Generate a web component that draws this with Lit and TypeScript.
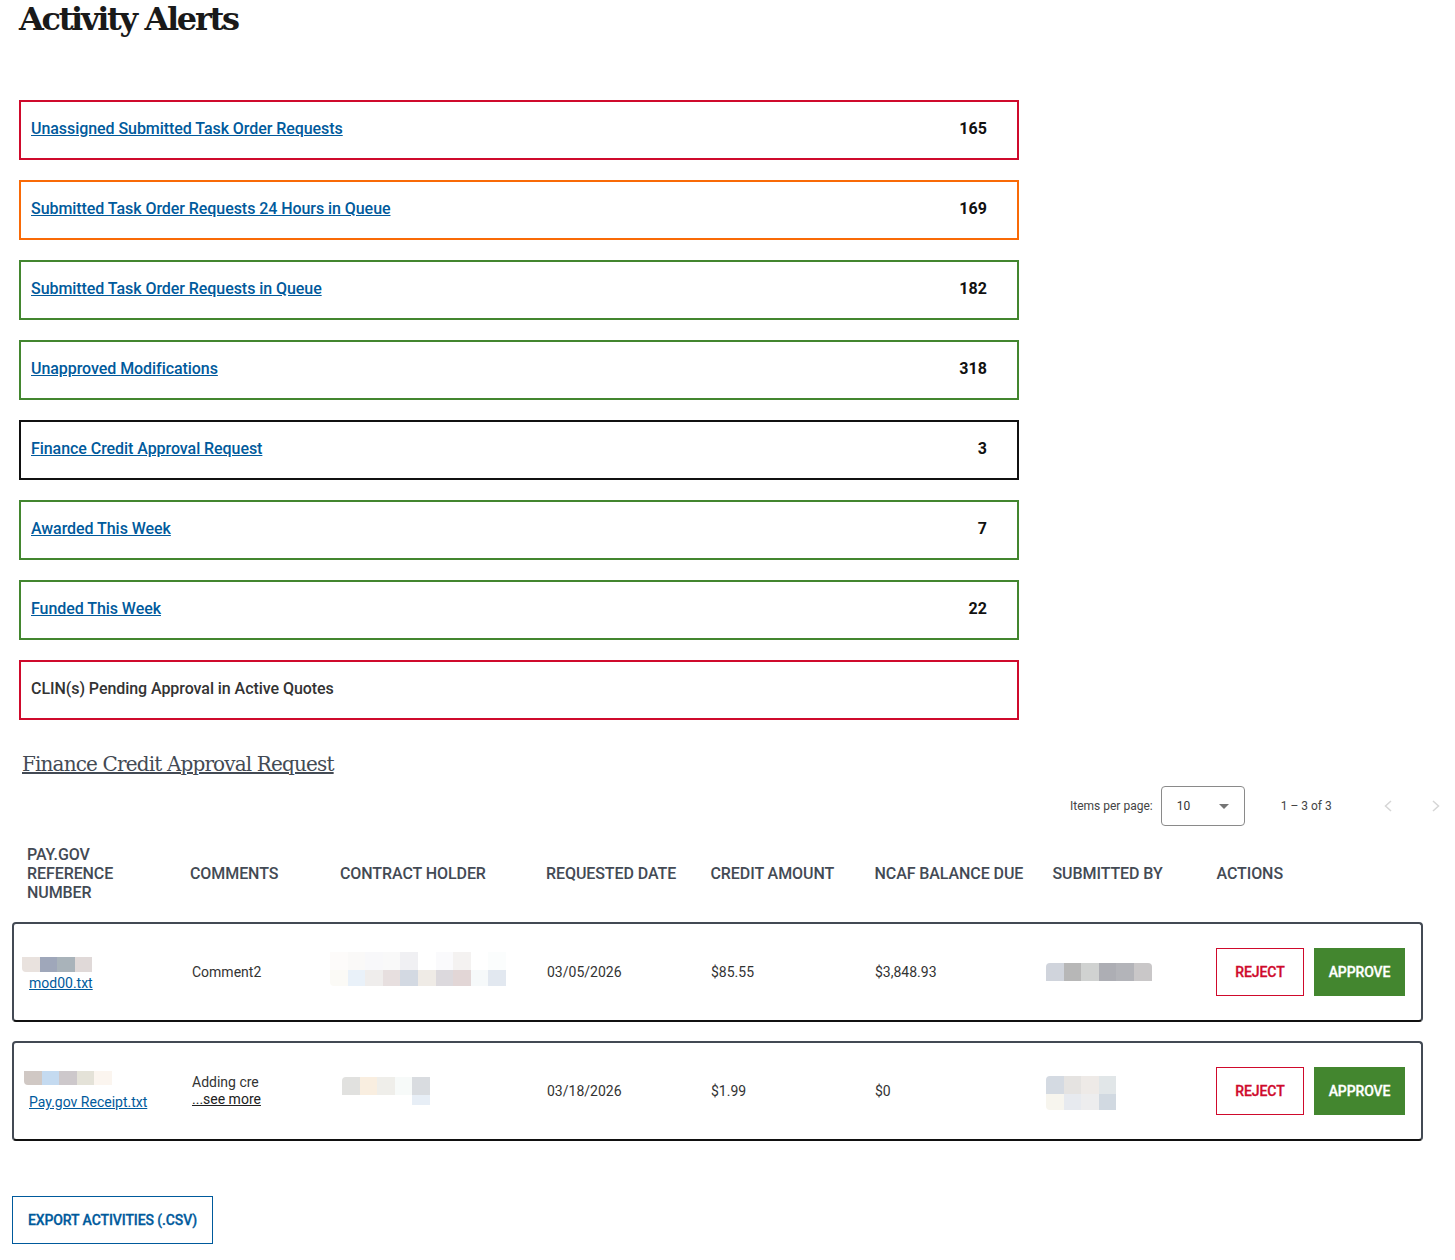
import { LitElement, html, css } from "lit";
import { customElement } from "lit/decorators.js";

const alerts = [
  { label: "Unassigned Submitted Task Order Requests", count: "165", tone: "red", link: true },
  { label: "Submitted Task Order Requests 24 Hours in Queue", count: "169", tone: "orange", link: true },
  { label: "Submitted Task Order Requests in Queue", count: "182", tone: "green", link: true },
  { label: "Unapproved Modifications", count: "318", tone: "green", link: true },
  { label: "Finance Credit Approval Request", count: "3", tone: "black", link: true },
  { label: "Awarded This Week", count: "7", tone: "green", link: true },
  { label: "Funded This Week", count: "22", tone: "green", link: true },
  { label: "CLIN(s) Pending Approval in Active Quotes", count: "", tone: "red", link: false },
];

const headers = [
  "PAY.GOV REFERENCE NUMBER",
  "COMMENTS",
  "CONTRACT HOLDER",
  "REQUESTED DATE",
  "CREDIT AMOUNT",
  "NCAF BALANCE DUE",
  "SUBMITTED BY",
  "ACTIONS",
];

type Mosaic = { cols: number; heights: number[]; cells: string[] };

const rows = [
  {
    file: "mod00.txt",
    ref: { cols: 4, heights: [15], cells: ["#e9e2de", "#9fa7ba", "#a9b3ba", "#e0d9d8"] },
    refClass: "ref-a",
    holder: {
      cols: 10,
      heights: [18, 16],
      cells: [
        "#fdfbfa", "#faf9f8", "#f8f8fa", "#f9f9f9", "#f0f0f3", "#ffffff", "#fafafc", "#f4f2f1", "#ffffff", "#fbfdfd",
        "#fbfaf6", "#e9f1f9", "#efedec", "#e7dfdf", "#d3d9e2", "#efebe6", "#dcd9dd", "#e2d6d6", "#f6f9fa", "#e2e8f0",
      ],
    },
    holderClass: "holder-a",
    date: "03/05/2026",
    credit: "$85.55",
    balance: "$3,848.93",
    by: { cols: 6, heights: [18], cells: ["#d0d4dc", "#b7b7b7", "#d0d2d1", "#adaeb4", "#b3b4b9", "#c9c7c8"] },
    byClass: "by-a",
    comment: "Comment2",
    more: false,
  },
  {
    file: "Pay.gov Receipt.txt",
    ref: { cols: 5, heights: [14], cells: ["#d0c8c4", "#c4daf0", "#cdc8cb", "#e4e2d8", "#fbf5ef"] },
    refClass: "ref-b",
    holder: {
      cols: 5,
      heights: [18, 10],
      cells: [
        "#e1e1df", "#f9eee0", "#efeeea", "#f7faf9", "#d9dce0",
        "#ffffff", "#ffffff", "#ffffff", "#ffffff", "#e7eef6",
      ],
    },
    holderClass: "holder-b",
    date: "03/18/2026",
    credit: "$1.99",
    balance: "$0",
    by: {
      cols: 4,
      heights: [18, 16],
      cells: ["#d4dae2", "#e5e3e1", "#eeeae7", "#e1e6e8", "#f7f5ee", "#e7eaef", "#ededee", "#d1d9e1"],
    },
    byClass: "by-b",
    comment: "Adding cre",
    more: true,
  },
];

// redacted values show up as pixelated blocks in the reference
const mosaic = (m: Mosaic, cls = "") => html`<div
  class="mosaic ${cls}"
  style="grid-template-columns: repeat(${m.cols}, 17.6px); grid-template-rows: ${m.heights.map((h) => h + "px").join(" ")}"
>
  ${m.cells.map((c) => html`<span style="background: ${c}"></span>`)}
</div>`;

@customElement("app-root")
export class AppRoot extends LitElement {
  static styles = css`
    :host {
      display: block;
      width: 1455px;
      height: 1260px;
      overflow: hidden;
      background: #fff;
      font-family: Roboto, "Liberation Sans", sans-serif;
      color: #212121;
    }
    .title {
      margin: 0;
      padding: 0 0 0 19px;
      height: 100px;
      font-family: "DejaVu Serif", serif;
      font-size: 32px;
      font-weight: 700;
      line-height: 39px;
      letter-spacing: -2.33px;
      color: #1a1a1a;
      box-sizing: border-box;
    }
    .alerts {
      display: flex;
      flex-direction: column;
      gap: 20px;
      width: 1000px;
      margin-left: 19px;
    }
    .alert {
      display: flex;
      align-items: center;
      justify-content: space-between;
      box-sizing: border-box;
      height: 60px;
      padding: 0 30px 4px 10px;
      border: 2px solid;
      font-size: 16px;
      font-weight: 500;
      letter-spacing: -0.06px;
      color: #333;
    }
    .alert.red { border-color: #cf0a2c; }
    .alert.orange { border-color: #f96a07; }
    .alert.green { border-color: #43862f; }
    .alert.black { border-color: #111; }
    .alert a {
      color: #005a9c;
      text-decoration: underline;
    }
    .count {
      font-weight: 700;
      letter-spacing: 0.1px;
      color: #111;
    }
    .section {
      margin: 30px 0 0 22px;
      height: 36px;
      font-family: "DejaVu Serif", serif;
      font-size: 20px;
      font-weight: 400;
      line-height: 28px;
      letter-spacing: -0.85px;
      color: #434a54;
      text-decoration: underline;
    }
    .pager {
      display: flex;
      align-items: center;
      height: 40px;
      font-size: 12px;
      color: #444;
    }
    .pager .label {
      margin-left: 1070px;
    }
    .select {
      display: flex;
      align-items: center;
      justify-content: space-between;
      box-sizing: border-box;
      width: 84px;
      height: 40px;
      margin-left: 8px;
      padding: 0 15px;
      border: 1px solid #8a8a8a;
      border-radius: 4px;
      color: #333;
    }
    .caret {
      width: 0;
      height: 0;
      border-left: 5px solid transparent;
      border-right: 5px solid transparent;
      border-top: 5px solid #757575;
    }
    .range {
      margin-left: 36px;
      width: 103px;
    }
    .pager svg {
      display: block;
      width: 8px;
      height: 12px;
    }
    .pager .next {
      margin-left: 40px;
    }
    .head,
    .row {
      display: grid;
      align-items: center;
    }
    .head {
      grid-template-columns: 163px 150px 206px 164.5px 164px 178px 164px 1fr;
      margin: 18px 0 0 27px;
      height: 58px;
      font-size: 16px;
      font-weight: 500;
      line-height: 19px;
      letter-spacing: -0.08px;
      color: #434a54;
    }
    .head .wrap {
      width: 100px;
    }
    .table {
      display: flex;
      flex-direction: column;
      gap: 19px;
      margin: 20px 0 0 12px;
      width: 1411px;
    }
    .row {
      grid-template-columns: 176px 140px 216px 164px 164px 172px 170px 1fr;
      box-sizing: border-box;
      height: 100px;
      border: 2px solid #434a54;
      border-bottom-color: #111;
      border-radius: 4px;
      font-size: 14px;
      color: #333;
    }
    .mosaic {
      display: grid;
      width: max-content;
      overflow: hidden;
    }
    .ref-a { margin: 5px 0 2px 8px; border-bottom-left-radius: 4px; }
    .ref-b { margin: 0 0 8px 10px; border-bottom-left-radius: 4px; }
    .holder-a { margin-bottom: 6px; border-bottom-left-radius: 4px; }
    .holder-b { margin-left: 12px; border-top-left-radius: 4px; }
    .by-a { border-top-left-radius: 4px; border-top-right-radius: 4px; }
    .by-b { margin-top: 4px; border-top-left-radius: 4px; border-bottom-left-radius: 4px; }
    .file {
      display: block;
      margin-left: 15px;
      line-height: 18px;
      color: #005a9c;
      text-decoration: underline;
    }
    .comment {
      padding-left: 2px;
      line-height: 19px;
    }
    .comment a {
      display: block;
      margin-bottom: 2px;
      color: #212121;
      text-decoration: underline;
      line-height: 15px;
    }
    .value {
      padding-left: 1px;
    }
    .actions {
      display: flex;
      gap: 10px;
    }
    button {
      box-sizing: border-box;
      height: 48px;
      padding: 0;
      font-family: Roboto, "Liberation Sans", sans-serif;
      font-size: 14px;
      font-weight: 500;
      letter-spacing: -0.1px;
      border-radius: 0;
      -webkit-text-stroke: 0.3px currentColor;
    }
    .reject {
      width: 88px;
      background: #fff;
      border: 1px solid #cf0a2c;
      color: #cf0a2c;
    }
    .approve {
      width: 91px;
      background: #43862f;
      border: 0;
      color: #fff;
    }
    .export {
      display: block;
      width: 201px;
      margin: 55px 0 0 12px;
      background: #fff;
      border: 1px solid #005a9c;
      color: #005a9c;
    }
  `;

  render() {
    return html`
      <h1 class="title">Activity Alerts</h1>
      <div class="alerts">
        ${alerts.map(
          (a) => html`<div class="alert ${a.tone}">
            ${a.link ? html`<a href="#">${a.label}</a>` : html`<span>${a.label}</span>`}
            <span class="count">${a.count}</span>
          </div>`
        )}
      </div>
      <h2 class="section">Finance Credit Approval Request</h2>
      <div class="pager">
        <span class="label">Items per page:</span>
        <div class="select"><span>10</span><span class="caret"></span></div>
        <span class="range">1 – 3 of 3</span>
        <svg viewBox="0 0 8 12" fill="none" stroke="#d6d6d6" stroke-width="1.5"><path d="M7 1 L1.5 6 L7 11" /></svg>
        <svg class="next" viewBox="0 0 8 12" fill="none" stroke="#d6d6d6" stroke-width="1.5"><path d="M1 1 L6.5 6 L1 11" /></svg>
      </div>
      <div class="head">
        ${headers.map((h, i) => html`<div class=${i === 0 ? "wrap" : ""}>${h}</div>`)}
      </div>
      <div class="table">
        ${rows.map(
          (r) => html`<div class="row">
            <div>
              ${mosaic(r.ref, r.refClass)}
              <a class="file" href="#">${r.file}</a>
            </div>
            <div class="comment">
              ${r.comment}
              ${r.more ? html`<a href="#">...see more</a>` : ""}
            </div>
            <div>${mosaic(r.holder, r.holderClass)}</div>
            <div class="value">${r.date}</div>
            <div class="value">${r.credit}</div>
            <div class="value">${r.balance}</div>
            <div>${mosaic(r.by, r.byClass)}</div>
            <div class="actions">
              <button class="reject">REJECT</button>
              <button class="approve">APPROVE</button>
            </div>
          </div>`
        )}
      </div>
      <button class="export">EXPORT ACTIVITIES (.CSV)</button>
    `;
  }
}
